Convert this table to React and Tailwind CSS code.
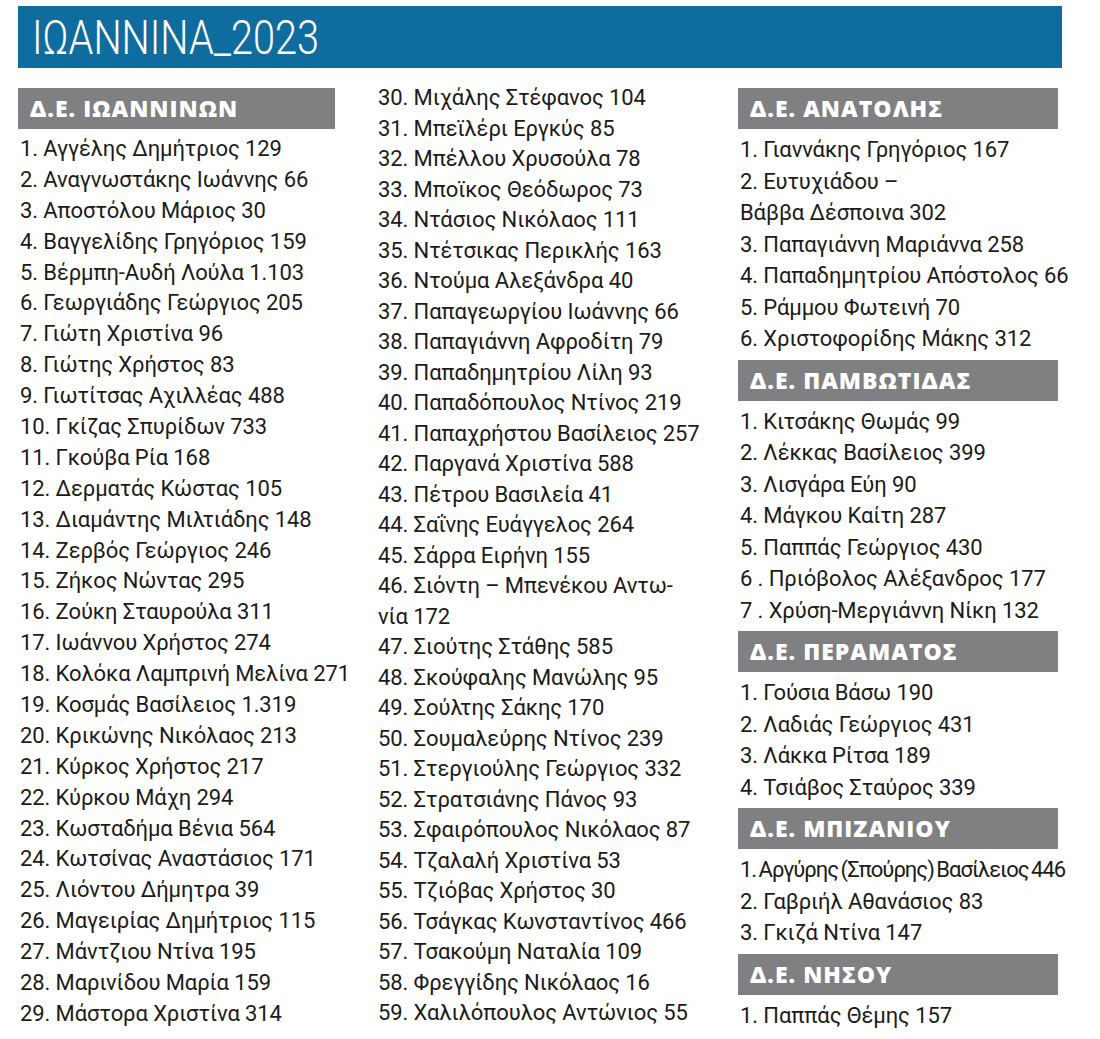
const col1 = [
  "1. Αγγέλης Δημήτριος 129",
  "2. Αναγνωστάκης Ιωάννης 66",
  "3. Αποστόλου Μάριος 30",
  "4. Βαγγελίδης Γρηγόριος 159",
  "5. Βέρμπη-Αυδή Λούλα 1.103",
  "6. Γεωργιάδης Γεώργιος 205",
  "7. Γιώτη Χριστίνα 96",
  "8. Γιώτης Χρήστος 83",
  "9. Γιωτίτσας Αχιλλέας 488",
  "10. Γκίζας Σπυρίδων 733",
  "11. Γκούβα Ρία 168",
  "12. Δερματάς Κώστας 105",
  "13. Διαμάντης Μιλτιάδης 148",
  "14. Ζερβός Γεώργιος 246",
  "15. Ζήκος Νώντας 295",
  "16. Ζούκη Σταυρούλα 311",
  "17. Ιωάννου Χρήστος 274",
  "18. Κολόκα Λαμπρινή Μελίνα 271",
  "19. Κοσμάς Βασίλειος 1.319",
  "20. Κρικώνης Νικόλαος 213",
  "21. Κύρκος Χρήστος 217",
  "22. Κύρκου Μάχη 294",
  "23. Κωσταδήμα Βένια 564",
  "24. Κωτσίνας Αναστάσιος 171",
  "25. Λιόντου Δήμητρα 39",
  "26. Μαγειρίας Δημήτριος 115",
  "27. Μάντζιου Ντίνα 195",
  "28. Μαρινίδου Μαρία 159",
  "29. Μάστορα Χριστίνα 314",
];

const col2 = [
  "30. Μιχάλης Στέφανος 104",
  "31. Μπεϊλέρι Εργκύς 85",
  "32. Μπέλλου Χρυσούλα 78",
  "33. Μποϊκος Θεόδωρος 73",
  "34. Ντάσιος Νικόλαος 111",
  "35. Ντέτσικας Περικλής 163",
  "36. Ντούμα Αλεξάνδρα 40",
  "37. Παπαγεωργίου Ιωάννης 66",
  "38. Παπαγιάννη Αφροδίτη 79",
  "39. Παπαδημητρίου Λίλη 93",
  "40. Παπαδόπουλος Ντίνος 219",
  "41. Παπαχρήστου Βασίλειος 257",
  "42. Παργανά Χριστίνα 588",
  "43. Πέτρου Βασιλεία 41",
  "44. Σαΐνης Ευάγγελος 264",
  "45. Σάρρα Ειρήνη 155",
  "46. Σιόντη – Μπενέκου Αντω-",
  "νία 172",
  "47. Σιούτης Στάθης 585",
  "48. Σκούφαλης Μανώλης 95",
  "49. Σούλτης Σάκης 170",
  "50. Σουμαλεύρης Ντίνος 239",
  "51. Στεργιούλης Γεώργιος 332",
  "52. Στρατσιάνης Πάνος 93",
  "53. Σφαιρόπουλος Νικόλαος 87",
  "54. Τζαλαλή Χριστίνα 53",
  "55. Τζιόβας Χρήστος 30",
  "56. Τσάγκας Κωνσταντίνος 466",
  "57. Τσακούμη Ναταλία 109",
  "58. Φρεγγίδης Νικόλαος 16",
  "59. Χαλιλόπουλος Αντώνιος 55",
];

const groups = [
  {
    title: "Δ.Ε. ΑΝΑΤΟΛΗΣ",
    items: [
      "1. Γιαννάκης Γρηγόριος 167",
      "2. Ευτυχιάδου –",
      "Βάββα Δέσποινα 302",
      "3. Παπαγιάννη Μαριάννα 258",
      "4. Παπαδημητρίου Απόστολος 66",
      "5. Ράμμου Φωτεινή 70",
      "6. Χριστοφορίδης Μάκης 312",
    ],
  },
  {
    title: "Δ.Ε. ΠΑΜΒΩΤΙΔΑΣ",
    items: [
      "1. Κιτσάκης Θωμάς 99",
      "2. Λέκκας Βασίλειος 399",
      "3. Λισγάρα Εύη 90",
      "4. Μάγκου Καίτη 287",
      "5. Παππάς Γεώργιος 430",
      "6 . Πριόβολος Αλέξανδρος 177",
      "7 . Χρύση-Μεργιάννη Νίκη 132",
    ],
  },
  {
    title: "Δ.Ε. ΠΕΡΑΜΑΤΟΣ",
    items: [
      "1. Γούσια Βάσω 190",
      "2. Λαδιάς Γεώργιος 431",
      "3. Λάκκα Ρίτσα 189",
      "4. Τσιάβος Σταύρος 339",
    ],
  },
  {
    title: "Δ.Ε. ΜΠΙΖΑΝΙΟΥ",
    items: [
      "1. Αργύρης (Σπούρης) Βασίλειος 446",
      "2. Γαβριήλ Αθανάσιος 83",
      "3. Γκιζά Ντίνα 147",
    ],
  },
  {
    title: "Δ.Ε. ΝΗΣΟΥ",
    items: ["1. Παππάς Θέμης 157"],
  },
];

function SectionHead({ title }) {
  return (
    <div className="h-[41px] bg-[#808083] flex items-center pl-3 my-[5px]">
      <span className="text-white text-[23px] font-black tracking-[1px] font-['Open_Sans',sans-serif]">
        {title}
      </span>
    </div>
  );
}

// line heights differ a little per column in the print layout
function Line({ text, h }) {
  const tight = text.length > 32;
  return (
    <div
      className={
        "whitespace-nowrap text-[22px] text-[#1b1b1b] " +
        (tight ? "tracking-[-1px] [word-spacing:-2px]" : "tracking-[-0.1px]")
      }
      style={{ height: h, lineHeight: h + "px" }}
    >
      {text}
    </div>
  );
}

export default function App() {
  return (
    <div className="w-[1100px] h-[1039px] bg-white font-['Roboto',sans-serif] pt-[6px] pl-[18px] overflow-hidden">
      <div className="w-[1044px] h-[62px] bg-[#0e6d9e] flex items-center pl-[14px] overflow-hidden">
        <span className="inline-block origin-left scale-x-[0.81] text-white text-[49px] font-light leading-none">
          ΙΩΑΝΝΙΝΑ_2023
        </span>
      </div>
      <div className="flex mt-[15px]">
        <div className="w-[360px]">
          <div className="w-[317px]">
            <SectionHead title="Δ.Ε. ΙΩΑΝΝΙΝΩΝ" />
          </div>
          <div className="pl-[2px]">
            {col1.map((t) => (
              <Line key={t} text={t} h={30.9} />
            ))}
          </div>
        </div>
        <div className="w-[360px]">
          {col2.map((t) => (
            <Line key={t} text={t} h={30.53} />
          ))}
        </div>
        <div className="w-[320px]">
          {groups.map((g) => (
            <div key={g.title}>
              <SectionHead title={g.title} />
              <div className="pl-[2px]">
                {g.items.map((t) => (
                  <Line key={t} text={t} h={31.5} />
                ))}
              </div>
            </div>
          ))}
        </div>
      </div>
    </div>
  );
}
